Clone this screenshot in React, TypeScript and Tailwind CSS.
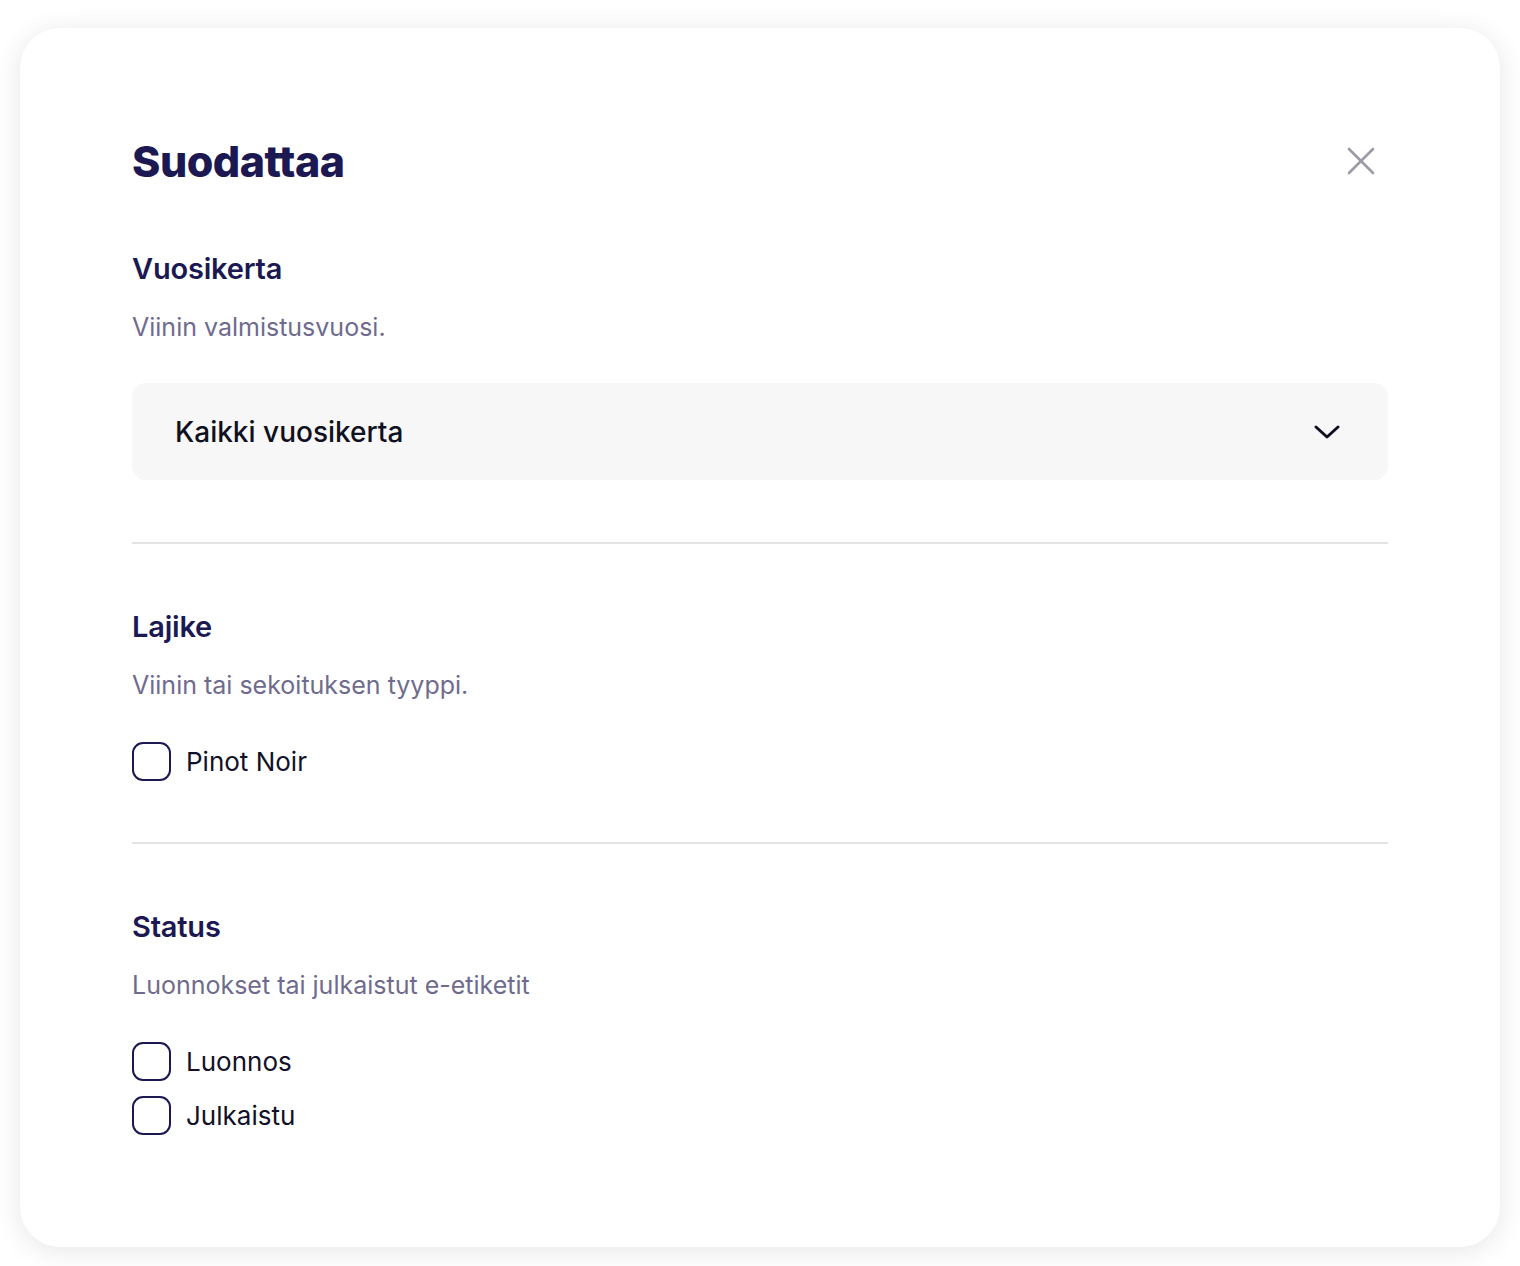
import React from "react";

const font = { fontFamily: "Inter, 'Noto Sans', sans-serif" };

function Checkbox({ label }: { label: string }) {
  return (
    <label className="flex items-center gap-[15px] h-[54px]">
      <span className="block w-[39px] h-[39px] rounded-[11px] border-2 border-[#1c1852] bg-white" />
      <span className="text-[26px] text-[#111127]">{label}</span>
    </label>
  );
}

function Section({ title, desc, children }: { title: string; desc: string; children: React.ReactNode }) {
  return (
    <div>
      <h3 className="text-[29px] leading-[36px] font-semibold text-[#1c1852] tracking-[-0.2px]">{title}</h3>
      <p className="mt-[24px] text-[25px] leading-[32px] text-[#6f6b8e]">{desc}</p>
      {children}
    </div>
  );
}

export default function App() {
  return (
    <div className="w-[1520px] h-[1266px] bg-white pt-[28px] px-[20px]" style={font}>
      <div className="w-[1480px] h-[1219px] rounded-[40px] bg-white shadow-[0_4px_28px_rgba(0,0,0,0.10)] px-[112px] pt-[107px]">
        <div className="flex items-center justify-between">
          <h2 className="text-[43px] leading-[52px] font-extrabold text-[#1c1852] tracking-[-0.5px]">Suodattaa</h2>
          <button className="mr-[12px] text-[#9b9aa5]">
            <svg width="30" height="30" viewBox="0 0 30 30" fill="none" stroke="currentColor" strokeWidth="2.6" strokeLinecap="round">
              <path d="M3 3 L27 27 M27 3 L3 27" />
            </svg>
          </button>
        </div>

        <div className="mt-[64px]">
          <Section title="Vuosikerta" desc="Viinin valmistusvuosi.">
            <div className="mt-[40px] h-[97px] rounded-[14px] bg-[#f7f7f7] flex items-center justify-between pl-[43px] pr-[48px]">
              <span className="text-[28px] font-medium text-[#0f1020]">Kaikki vuosikerta</span>
              <svg width="26" height="16" viewBox="0 0 26 16" fill="none" stroke="#0f1020" strokeWidth="3" strokeLinecap="round" strokeLinejoin="round">
                <path d="M2 3 L13 13 L24 3" />
              </svg>
            </div>
          </Section>
        </div>

        <div className="mt-[62px] h-[2px] bg-[#e3e3e6]" />

        <div className="mt-[65px]">
          <Section title="Lajike" desc="Viinin tai sekoituksen tyyppi.">
            <div className="mt-[33px]">
              <Checkbox label="Pinot Noir" />
            </div>
          </Section>
        </div>

        <div className="mt-[54px] h-[2px] bg-[#e3e3e6]" />

        <div className="mt-[65px]">
          <Section title="Status" desc="Luonnokset tai julkaistut e-etiketit">
            <div className="mt-[33px] flex flex-col">
              <Checkbox label="Luonnos" />
              <Checkbox label="Julkaistu" />
            </div>
          </Section>
        </div>
      </div>
    </div>
  );
}
